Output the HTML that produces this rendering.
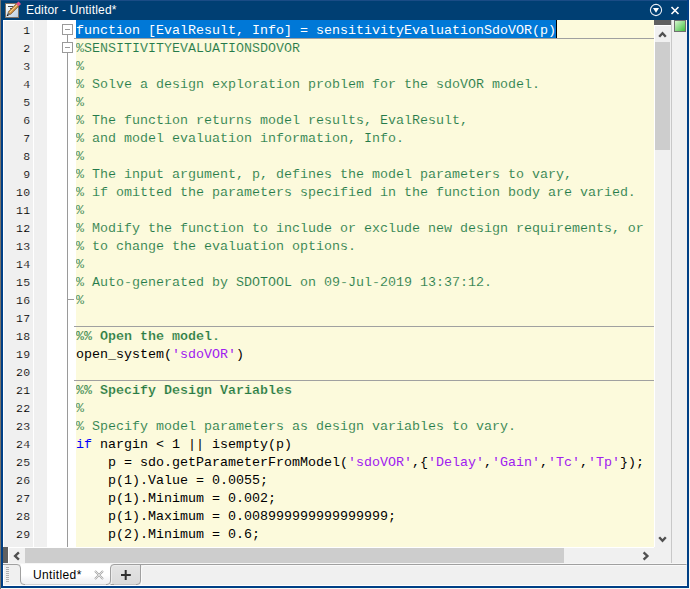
<!DOCTYPE html>
<html><head><meta charset="utf-8">
<style>
*{margin:0;padding:0;box-sizing:border-box}
html,body{width:690px;height:589px;overflow:hidden;background:#f0f0f0}
body{position:relative;font-family:"Liberation Sans",sans-serif}
.a{position:absolute}
#title{left:0;top:0;width:689px;height:20px;background:#003f73}
#ttext{left:26px;top:2px;z-index:2;font-size:12px;letter-spacing:0.18px;color:#fff;line-height:16px;white-space:pre}
#lb{left:0;top:0;width:1px;height:589px;background:#78746e}
#bl{left:1px;top:20px;width:2px;height:568px;background:#003f85}
#br{left:687px;top:0;width:2px;height:588px;background:#003f85}
#bb{left:1px;top:586px;width:688px;height:2px;background:#003f85}
#lnc{left:3px;top:20px;width:30px;height:527px;background:#f0f0f0}
#lnw{left:33px;top:20px;width:1px;height:527px;background:#fff}
#lnc2{left:34px;top:20px;width:13px;height:527px;background:#f0f0f0}
#gut{left:47px;top:20px;width:29px;height:527px;background:#fff}
#code{left:76px;top:20px;width:578px;height:527px;background:#fcfadc;overflow:hidden}
.ln{position:absolute;left:4px;width:26.5px;padding-top:1.5px;text-align:right;font-family:"Liberation Mono",monospace;font-size:11.5px;letter-spacing:0.4px;-webkit-text-stroke:0.15px #f0f0f0;color:#000;height:18px;line-height:18px}
.row{position:absolute;left:0;height:18px;line-height:18px;padding-top:2px;font-family:"Liberation Mono",monospace;font-size:13.333px;white-space:pre;color:#000}
.c{color:#247a4a;-webkit-text-stroke:0.12px #fcfadc}
.k{color:#0000ff}
.s{color:#a020f0}
.b{font-weight:bold;color:#287a44;-webkit-text-stroke:0.2px #fcfadc}
.sel{background:#0078d7;color:#fff}
.sep{position:absolute;height:1px;background:#a0a0a0}
</style></head><body>
<div class="a" id="title"></div>
<div class="a" id="ttext">Editor - Untitled*</div>
<div class="a" id="lnc"></div>
<div class="a" id="lnw"></div><div class="a" style="left:3px;top:20px;width:44px;height:1px;background:#fff"></div><div class="a" style="left:3px;top:20px;width:1px;height:527px;background:#fff"></div>
<div class="a" id="lnc2"></div>
<div class="a" id="gut"></div>
<svg class="a" style="left:47px;top:20px" width="29" height="527">
 <g fill="none" stroke="#9a9a9a" stroke-width="1">
  <rect x="15.5" y="4.5" width="10" height="10"/>
  <rect x="15.5" y="22.5" width="10" height="10"/>
  <line x1="20.5" y1="15" x2="20.5" y2="22"/>
  <line x1="20.5" y1="33" x2="20.5" y2="527"/>
  <line x1="20.5" y1="279.5" x2="27" y2="279.5"/>
  <line x1="18" y1="9.5" x2="23" y2="9.5"/>
  <line x1="18" y1="27.5" x2="23" y2="27.5"/>
 </g>
</svg>
<div class="a" id="code">
<div class="a" style="left:0;top:0;width:480px;height:18px;background:#0078d7"></div><div class="a" style="left:480px;top:0;width:1px;height:18px;background:#000"></div><div class="row" style="top:0;color:#fff">function [EvalResult, Info] = sensitivityEvaluationSdoVOR(p)</div>
<div class="row c" style="top:18px">%SENSITIVITYEVALUATIONSDOVOR</div>
<div class="row c" style="top:36px">%</div>
<div class="row c" style="top:54px">% Solve a design exploration problem for the sdoVOR model.</div>
<div class="row c" style="top:72px">%</div>
<div class="row c" style="top:90px">% The function returns model results, EvalResult,</div>
<div class="row c" style="top:108px">% and model evaluation information, Info.</div>
<div class="row c" style="top:126px">%</div>
<div class="row c" style="top:144px">% The input argument, p, defines the model parameters to vary,</div>
<div class="row c" style="top:162px">% if omitted the parameters specified in the function body are varied.</div>
<div class="row c" style="top:180px">%</div>
<div class="row c" style="top:198px">% Modify the function to include or exclude new design requirements, or</div>
<div class="row c" style="top:216px">% to change the evaluation options.</div>
<div class="row c" style="top:234px">%</div>
<div class="row c" style="top:252px">% Auto-generated by SDOTOOL on 09-Jul-2019 13:37:12.</div>
<div class="row c" style="top:270px">%</div>
<div class="row c b" style="top:306px">%% Open the model.</div>
<div class="row" style="top:324px">open_system(<span class="s">'sdoVOR'</span>)</div>
<div class="row c b" style="top:360px">%% Specify Design Variables</div>
<div class="row c" style="top:378px">%</div>
<div class="row c" style="top:396px">% Specify model parameters as design variables to vary.</div>
<div class="row" style="top:414px"><span class="k">if</span> nargin &lt; 1 || isempty(p)</div>
<div class="row" style="top:432px">    p = sdo.getParameterFromModel(<span class="s">'sdoVOR'</span>,{<span class="s">'Delay'</span>,<span class="s">'Gain'</span>,<span class="s">'Tc'</span>,<span class="s">'Tp'</span>});</div>
<div class="row" style="top:450px">    p(1).Value = 0.0055;</div>
<div class="row" style="top:468px">    p(1).Minimum = 0.002;</div>
<div class="row" style="top:486px">    p(1).Maximum = 0.008999999999999999;</div>
<div class="row" style="top:504px">    p(2).Minimum = 0.6;</div>
</div>
<div class="ln" style="top:20px">1</div>
<div class="ln" style="top:38px">2</div>
<div class="ln" style="top:56px">3</div>
<div class="ln" style="top:74px">4</div>
<div class="ln" style="top:92px">5</div>
<div class="ln" style="top:110px">6</div>
<div class="ln" style="top:128px">7</div>
<div class="ln" style="top:146px">8</div>
<div class="ln" style="top:164px">9</div>
<div class="ln" style="top:182px">10</div>
<div class="ln" style="top:200px">11</div>
<div class="ln" style="top:218px">12</div>
<div class="ln" style="top:236px">13</div>
<div class="ln" style="top:254px">14</div>
<div class="ln" style="top:272px">15</div>
<div class="ln" style="top:290px">16</div>
<div class="ln" style="top:308px">17</div>
<div class="ln" style="top:326px">18</div>
<div class="ln" style="top:344px">19</div>
<div class="ln" style="top:362px">20</div>
<div class="ln" style="top:380px">21</div>
<div class="ln" style="top:398px">22</div>
<div class="ln" style="top:416px">23</div>
<div class="ln" style="top:434px">24</div>
<div class="ln" style="top:452px">25</div>
<div class="ln" style="top:470px">26</div>
<div class="ln" style="top:488px">27</div>
<div class="ln" style="top:506px">28</div>
<div class="ln" style="top:524px">29</div>

<div class="sep" style="left:74px;top:38px;width:580px"></div>
<div class="sep" style="left:74px;top:326px;width:580px"></div>
<div class="sep" style="left:74px;top:380px;width:580px"></div>

<svg class="a" style="left:0;top:0" width="690" height="20">
 <rect x="0" y="0" width="690" height="1" fill="#1a4c86"/>
 <defs><linearGradient id="pg" x1="0" y1="0" x2="1" y2="1"><stop offset="0" stop-color="#ffffff"/><stop offset="1" stop-color="#b8cde0"/></linearGradient></defs>
 <rect x="5.5" y="3.5" width="13" height="14" fill="url(#pg)" stroke="#7e7164" stroke-width="1"/>
 <rect x="8" y="6" width="5" height="1" fill="#4a4a4a"/>
 <rect x="10" y="8" width="2" height="1" fill="#5a5a5a"/>
 <line x1="9.2" y1="13.3" x2="17.6" y2="4.9" stroke="#7a4c18" stroke-width="3.8"/>
 <line x1="9.2" y1="13.3" x2="17.6" y2="4.9" stroke="#dca050" stroke-width="2.5"/>
 <line x1="9.5" y1="12.4" x2="17.2" y2="4.7" stroke="#ffe3a0" stroke-width="0.8"/>
 <line x1="17.4" y1="5.1" x2="19.8" y2="2.7" stroke="#e0508a" stroke-width="3.6"/>
 <polygon points="6.8,16 10.5,14.6 7.9,12" fill="#6a6a6a"/>
 <polygon points="6.6,16.2 8.6,15.5 7.3,14.2" fill="#111"/>
 <circle cx="656" cy="10" r="5.6" fill="none" stroke="#e8eef5" stroke-width="1.1"/>
 <path d="M653 8 L659 8 L656 12.7 Z" fill="#fff"/>
 <path d="M671.5 7 L678.5 14 M678.5 7 L671.5 14" stroke="#fff" stroke-width="1.6"/>
</svg>
<!-- vertical scrollbar -->
<div class="a" style="left:654px;top:20px;width:17px;height:527px;background:#f0f0f0"></div>
<div class="a" style="left:654px;top:25px;width:1px;height:522px;background:#fff"></div>
<div class="a" style="left:654px;top:25px;width:17px;height:1px;background:#fff"></div>
<div class="a" style="left:654px;top:20px;width:17px;height:5px;background:#606060"></div>
<div class="a" style="left:655px;top:42px;width:15px;height:108px;background:#cdcdcd"></div>
<svg class="a" style="left:654px;top:20px" width="17" height="527">
 <path d="M5.2 16.8 L8.5 13.2 L11.8 16.8" fill="none" stroke="#505050" stroke-width="2.4"/>
 <path d="M5.2 517.2 L8.5 520.8 L11.8 517.2" fill="none" stroke="#505050" stroke-width="2.4"/>
</svg>
<div class="a" style="left:671px;top:20px;width:1px;height:544px;background:#c8c8c8"></div>
<div class="a" style="left:672px;top:20px;width:15px;height:544px;background:#f0f0f0"></div>
<div class="a" style="left:674px;top:20px;width:12px;height:12px;border:1px solid #707070;background:linear-gradient(135deg,#d8f5d0,#40c040)"></div>
<!-- horizontal scrollbar -->
<div class="a" style="left:3px;top:547px;width:668px;height:17px;background:#f0f0f0"></div>
<div class="a" style="left:3px;top:547px;width:651px;height:1px;background:#fff"></div>
<div class="a" style="left:8px;top:547px;width:1px;height:17px;background:#fff"></div>
<div class="a" style="left:3px;top:547px;width:5px;height:17px;background:#606060"></div>
<div class="a" style="left:25px;top:548px;width:539px;height:15px;background:#cdcdcd"></div>
<svg class="a" style="left:0;top:547px" width="671" height="17">
 <path d="M18.9 5.3 L15.1 9 L18.9 12.7" fill="none" stroke="#505050" stroke-width="2.4"/>
 <path d="M643.6 5.3 L647.4 9 L643.6 12.7" fill="none" stroke="#505050" stroke-width="2.4"/>
</svg>
<!-- tab bar -->
<div class="a" style="left:3px;top:564px;width:684px;height:22px;background:#f0f0f0"></div>
<svg class="a" style="left:0;top:560px" width="690" height="29">
 <defs>
  <linearGradient id="tg" x1="0" y1="0" x2="0" y2="1"><stop offset="0" stop-color="#ffffff"/><stop offset="0.55" stop-color="#ffffff"/><stop offset="0.75" stop-color="#f5f5f7"/><stop offset="1" stop-color="#efeff1"/></linearGradient>
  <linearGradient id="pg2" x1="0" y1="0" x2="0" y2="1"><stop offset="0" stop-color="#e4e4e4"/><stop offset="1" stop-color="#dadada"/></linearGradient>
 </defs>
 <rect x="3" y="3" width="684" height="1" fill="#f6f6f6"/>
 <path d="M20.5 4 H110.5 V21 Q110.5 24.5 107 24.5 H24 Q20.5 24.5 20.5 21 Z" fill="url(#tg)"/>
 <path d="M110.5 8 Q110.5 4.5 114 4.5 H140.5 V21 Q140.5 24.5 137 24.5 H110.5 Z" fill="url(#pg2)"/>
 <path d="M111.5 24 V8.5 Q111.5 5.5 114.5 5.5 H139.5" fill="none" stroke="#ececec"/>
 <path d="M141.5 24.5 V9 Q141.5 5.5 145 5.5 H686" fill="none" stroke="#fafafa"/>
 <path d="M3 4.5 H17 Q20.5 4.5 20.5 8 V21 Q20.5 24.5 24 24.5 H107 Q110.5 24.5 110.5 21 V8 Q110.5 4.5 114 4.5 H686.5" fill="none" stroke="#a0a0a0"/>
 <path d="M140.5 4.5 V21 Q140.5 24.5 137 24.5 H110.5" fill="none" stroke="#a0a0a0"/>
 <rect x="25" y="24" width="81" height="1" fill="#d2d2d4"/>
 <rect x="114" y="24" width="22" height="1" fill="#c4c4c4"/>
 <g fill="#b0b0b0"><rect x="6" y="7" width="3" height="1"/><rect x="6" y="9" width="3" height="1"/><rect x="6" y="11" width="3" height="1"/><rect x="6" y="13" width="3" height="1"/><rect x="6" y="15" width="3" height="1"/><rect x="6" y="17" width="3" height="1"/><rect x="6" y="19" width="3" height="1"/><rect x="6" y="21" width="3" height="1"/></g>
 <rect x="3" y="5" width="1" height="20" fill="#fff"/>
 <path d="M95 11 L103 19 M103 11 L95 19" stroke="#a8a8a8" stroke-width="2"/>
 <path d="M95 11 L103 19 M103 11 L95 19" stroke="#f4f4f4" stroke-width="0.7"/>
 <path d="M125.7 10 V20 M121 15 H130.8" stroke="#303030" stroke-width="2"/>
 <rect x="3" y="25" width="684" height="1" fill="#fff"/>
</svg>
<div class="a" style="left:33px;top:567px;font-size:12px;line-height:16px;color:#000;letter-spacing:0.37px">Untitled*</div>
<div class="a" id="lb"></div>
<div class="a" id="bl"></div>
<div class="a" id="br"></div>
<div class="a" id="bb"></div><div class="a" style="left:689px;top:0;width:1px;height:589px;background:#f8f8f4"></div><div class="a" style="left:1px;top:588px;width:689px;height:1px;background:#f8f8f4"></div>
</body></html>
